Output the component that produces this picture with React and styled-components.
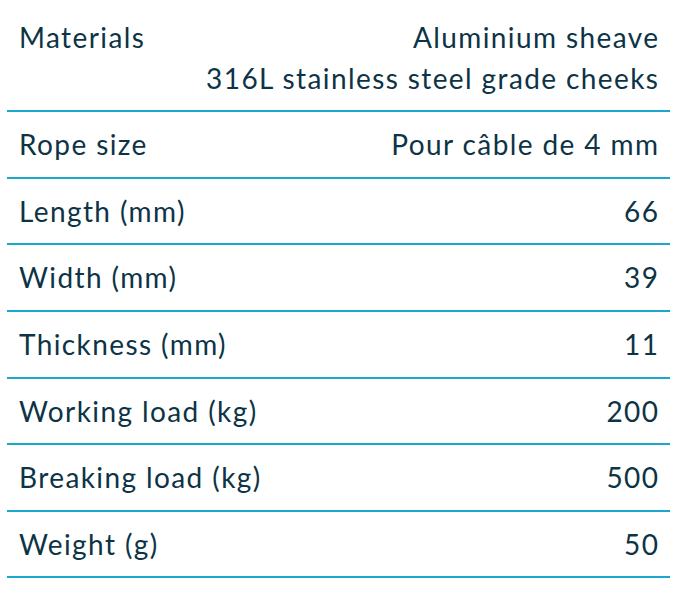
import React from 'react';
import styled, { createGlobalStyle } from 'styled-components';

const specs = [
  { label: 'Materials', value: ['Aluminium sheave', '316L stainless steel grade cheeks'] },
  { label: 'Rope size', value: ['Pour câble de 4 mm'] },
  { label: 'Length (mm)', value: ['66'] },
  { label: 'Width (mm)', value: ['39'] },
  { label: 'Thickness (mm)', value: ['11'] },
  { label: 'Working load (kg)', value: ['200'] },
  { label: 'Breaking load (kg)', value: ['500'] },
  { label: 'Weight (g)', value: ['50'] },
];

function App() {
  return (
    <>
      <GlobalStyle />
      <Page>
        <SpecTable>
          {specs.map((row) => (
            <Row key={row.label}>
              <Label>{row.label}</Label>
              <Value>
                {row.value.map((line) => (
                  <div key={line}>{line}</div>
                ))}
              </Value>
            </Row>
          ))}
        </SpecTable>
      </Page>
    </>
  );
}

const GlobalStyle = createGlobalStyle`
  body {
    margin: 0;
    background: #ffffff;
  }
`;

const Page = styled.div`
  padding: 5px 30px 0 7px;
  font-family: Lato, "Open Sans", sans-serif;
  color: #0d3446;
`;

const SpecTable = styled.div`
  display: flex;
  flex-direction: column;
`;

const Row = styled.div`
  display: flex;
  justify-content: space-between;
  align-items: flex-start;
  padding: 12px 12px;
  border-bottom: 2px solid #19a8cc;
  font-size: 28px;
  line-height: 40.6px;
  letter-spacing: 1.4px;
`;

const Label = styled.div`
  white-space: nowrap;
`;

const Value = styled.div`
  text-align: right;
  white-space: nowrap;
  margin-right: -1.4px;
`;

export default App;
